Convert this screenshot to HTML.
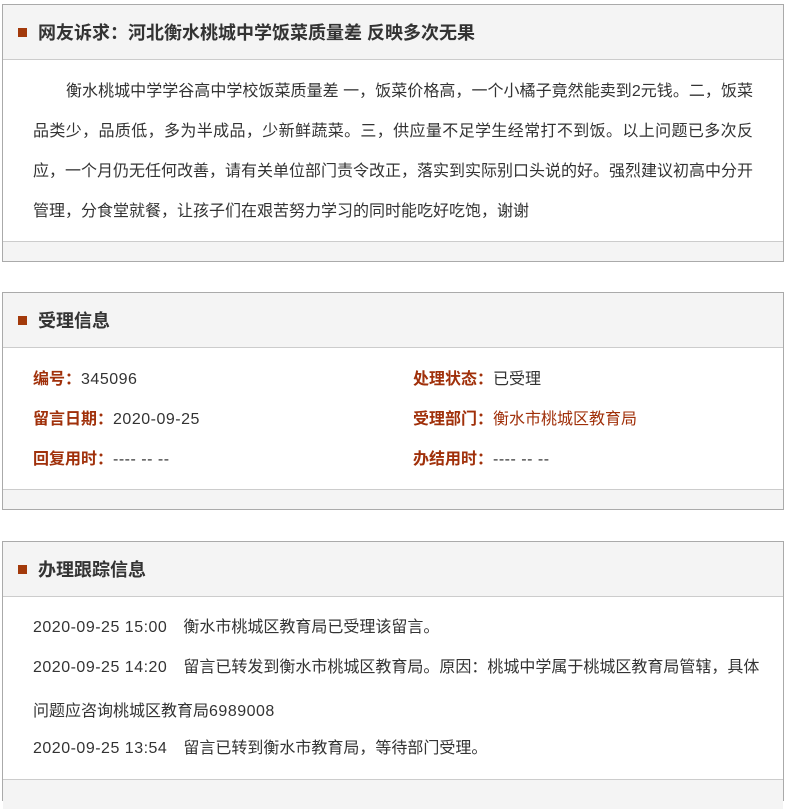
<!DOCTYPE html>
<html><head><meta charset="utf-8"><style>
*{margin:0;padding:0;box-sizing:border-box}
body{width:786px;height:787px;background:#fff;font-family:"Liberation Sans","Noto Sans CJK SC",sans-serif;color:#333;position:relative;overflow:hidden;font-size:16px}
.box{position:absolute;left:2px;width:782px;border:1px solid #aaa;background:#fff}
.hd{position:absolute;left:0;right:0;top:0;height:55px;background:#f4f4f4;border-bottom:1px solid #ccc}
.hd i{position:absolute;left:15px;top:23px;width:9px;height:9px;background:#a33a0b}
.hd b{position:absolute;left:35px;top:16px;font-size:18px;line-height:24px;color:#333}
.ft{position:absolute;left:0;right:0;bottom:0;height:20px;background:#f4f4f4;border-top:1px solid #ccc}
.t{position:absolute;line-height:24px;white-space:nowrap}
.l{color:#a0300a;font-weight:bold}
.n{letter-spacing:0.5px}
.j{display:block;width:720px;text-align:justify;text-align-last:justify;height:40px;line-height:40px;white-space:nowrap}
</style></head><body>
<div class="box" style="top:4px;height:258px">
 <div class="hd"><i></i><b>网友诉求：河北衡水桃城中学饭菜质量差 反映多次无果</b></div>
 <div style="position:absolute;left:30px;top:67px">
  <span class="j" style="padding-left:33px">衡水桃城中学学谷高中学校饭菜质量差 一，饭菜价格高，一个小橘子竟然能卖到2元钱。二，饭菜</span>
  <span class="j">品类少，品质低，多为半成品，少新鲜蔬菜。三，供应量不足学生经常打不到饭。以上问题已多次反</span>
  <span class="j">应，一个月仍无任何改善，请有关单位部门责令改正，落实到实际别口头说的好。强烈建议初高中分开</span>
  <span style="display:block;height:40px;line-height:40px">管理，分食堂就餐，让孩子们在艰苦努力学习的同时能吃好吃饱，谢谢</span>
 </div>
 <div class="ft"></div>
</div>
<div class="box" style="top:292px;height:218px">
 <div class="hd"><i></i><b>受理信息</b></div>
 <div class="t" style="left:30px;top:75px"><span class="l">编号：</span><span class="n">345096</span></div>
 <div class="t" style="left:30px;top:115px"><span class="l">留言日期：</span><span class="n">2020-09-25</span></div>
 <div class="t" style="left:30px;top:155px"><span class="l">回复用时：</span><span class="n">---- -- --</span></div>
 <div class="t" style="left:410px;top:75px"><span class="l">处理状态：</span>已受理</div>
 <div class="t" style="left:410px;top:115px"><span class="l">受理部门：</span><span style="color:#a0300a">衡水市桃城区教育局</span></div>
 <div class="t" style="left:410px;top:155px"><span class="l">办结用时：</span><span class="n">---- -- --</span></div>
 <div class="ft"></div>
</div>
<div class="box" style="top:541px;height:260px">
 <div class="hd"><i></i><b>办理跟踪信息</b></div>
 <div class="t" style="left:30px;top:74px"><span class="n">2020-09-25 15:00</span>　衡水市桃城区教育局已受理该留言。</div>
 <div class="t" style="left:30px;top:114px"><span class="n">2020-09-25 14:20</span>　留言已转发到衡水市桃城区教育局。原因：桃城中学属于桃城区教育局管辖，具体</div>
 <div class="t" style="left:30px;top:158px">问题应咨询桃城区教育局<span class="n">6989008</span></div>
 <div class="t" style="left:30px;top:195px"><span class="n">2020-09-25 13:54</span>　留言已转到衡水市教育局，等待部门受理。</div>
 <div class="ft" style="top:237px;bottom:auto;height:30px"></div>
</div>
</body></html>
